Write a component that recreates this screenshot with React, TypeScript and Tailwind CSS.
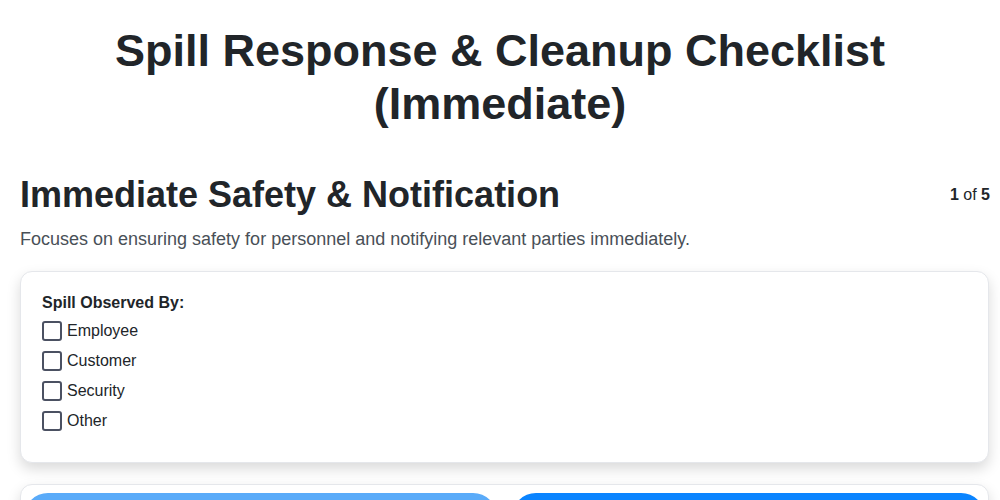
import { useState } from "react"

const observers = ["Employee", "Customer", "Security", "Other"]

export default function App() {
  const [checked, setChecked] = useState<Record<string, boolean>>({})

  const toggle = (name: string) => {
    setChecked((prev) => ({ ...prev, [name]: !prev[name] }))
  }

  return (
    <div className="h-screen overflow-hidden bg-white pt-6 pb-10 text-[#212529] font-['Liberation_Sans',Arial,sans-serif]">
      <h1 className="px-5 text-center text-[45px] leading-[53px] font-bold">
        Spill Response &amp; Cleanup Checklist (Immediate)
      </h1>

      <div className="pl-5 pr-[10px]">
        <div className="mt-[43px] flex items-start justify-between">
          <h2 className="text-[36px] leading-[44px] font-bold">Immediate Safety &amp; Notification</h2>
          <div className="pt-[10px] text-base">
            <span className="font-bold">1</span> of <span className="font-bold">5</span>
          </div>
        </div>
        <p className="mt-[10px] text-[18px] leading-6 text-[#495057]">
          Focuses on ensuring safety for personnel and notifying relevant parties immediately.
        </p>

        <div className="mt-5 mr-[1px] rounded-xl border border-[#e5e7eb] bg-white px-[21px] pt-[19px] pb-[31px] shadow-[0_6px_14px_rgba(0,0,0,0.15)]">
          <div className="text-base font-bold">Spill Observed By:</div>
          <div className="mt-[6px] flex flex-col gap-[10px]">
            {observers.map((name) => (
              <label key={name} className="flex h-5 cursor-pointer items-center gap-[5px] text-base">
                <input
                  type="checkbox"
                  checked={!!checked[name]}
                  onChange={() => toggle(name)}
                  className="peer sr-only"
                />
                <span className="h-5 w-5 rounded-[3px] border-2 border-[#4b5162] bg-white peer-checked:bg-[#0a84ff] peer-checked:border-[#0a84ff]" />
                <span>{name}</span>
              </label>
            ))}
          </div>
        </div>

        <div className="mt-[21px] mr-[1px] flex gap-[15px] rounded-xl border border-[#e5e7eb] bg-white p-[3px] pt-2 shadow-[0_6px_14px_rgba(0,0,0,0.15)]">
          <button className="h-12 flex-1 rounded-[24px] bg-[#5aabf9] text-base font-bold text-white">
            Previous
          </button>
          <button className="h-12 flex-1 rounded-[24px] bg-[#0a84ff] text-base font-bold text-white">
            Next
          </button>
        </div>
      </div>
    </div>
  )
}
